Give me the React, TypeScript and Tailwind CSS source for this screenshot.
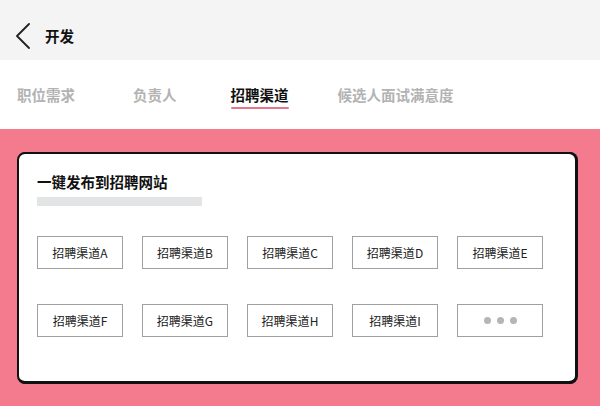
const TABS = ['职位需求', '负责人', '招聘渠道', '候选人面试满意度'];
const CHANNELS = ['A', 'B', 'C', 'D', 'E', 'F', 'G', 'H', 'I'];

export default function App() {
  return (
    <div
      className="flex h-[406px] w-[600px] flex-col overflow-hidden bg-white"
      style={{ fontFamily: '"Noto Sans CJK SC", "Noto Sans", sans-serif' }}
    >
      <div className="flex h-[60px] shrink-0 items-center bg-[#f5f4f4] pl-[15px] pt-[12px]">
        <svg width="16" height="26" viewBox="0 0 16 26" fill="none">
          <polyline points="14,1 2,13 14,25" stroke="#222" strokeWidth="1.8" strokeLinecap="round" strokeLinejoin="round" />
        </svg>
        <span className="ml-[14px] text-[14.5px] font-bold text-[#111]">开发</span>
      </div>

      <div className="flex h-[69px] shrink-0 items-center pl-[17px]">
        {TABS.map((tab, i) => {
          const active = i === 2;
          return (
            <div
              key={tab}
              className={
                'relative text-[14.5px] font-semibold ' +
                (i === 0 ? 'mr-[58px] ' : i === 1 ? 'mr-[54px] ' : i === 2 ? 'mr-[49px] ' : '') +
                (active ? 'text-[#111]' : 'text-[#b3b3b3]')
              }
            >
              {tab}
              {active && <div className="absolute -bottom-[4px] left-0 h-[2px] w-full rounded bg-[#e5768c]" />}
            </div>
          );
        })}
      </div>

      <div className="flex-1 bg-[#f47a8d] px-[17px] pt-[23px]">
        <div className="h-[232px] w-[560px] rounded-[8px] border-2 border-b-[3px] border-[#111] bg-white px-[18px] pt-[17px] shadow-[1px_0_0_#111]">
          <div className="text-[14.5px] font-semibold leading-[22px] text-[#111]">一键发布到招聘网站</div>
          <div className="mt-[4px] h-[9px] w-[165px] bg-[#e3e4e6]" />
          <div className="mt-[30px] grid grid-cols-[repeat(5,86px)] gap-x-[19px] gap-y-[35px]">
            {CHANNELS.map((c) => (
              <div
                key={c}
                className="flex h-[33px] items-center justify-center border border-[#a0a0a0] text-[12px] text-[#222]"
              >
                招聘渠道{c}
              </div>
            ))}
            <div className="flex h-[33px] items-center justify-center gap-[6px] border border-[#a0a0a0]">
              <span className="h-[7px] w-[7px] rounded-full bg-[#b5b5b5]" />
              <span className="h-[7px] w-[7px] rounded-full bg-[#b5b5b5]" />
              <span className="h-[7px] w-[7px] rounded-full bg-[#b5b5b5]" />
            </div>
          </div>
        </div>
      </div>
    </div>
  );
}
